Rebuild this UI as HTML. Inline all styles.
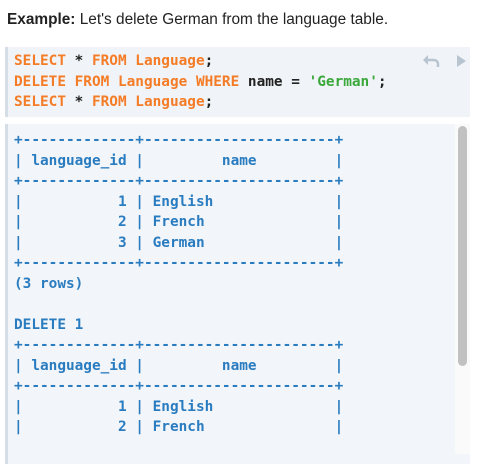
<!DOCTYPE html>
<html><head><style>
body{margin:0;width:481px;height:452px;overflow:hidden;background:#fff;font-family:"Liberation Sans",sans-serif;}
.h{position:absolute;left:7px;top:11px;font-size:15.4px;color:#222;}
.code{position:absolute;left:5px;top:47px;width:465px;height:70px;background:#f0f3f7;border-left:3px solid #d5dde6;box-sizing:border-box;}
pre{margin:0;font-family:"DejaVu Sans Mono","Liberation Mono",monospace;font-weight:bold;font-size:14.4px;line-height:20.5px;}
.code pre{position:absolute;left:6px;top:4px;color:#222;}
.k{color:#f57c27}.s{color:#3aa83a}
.out{position:absolute;left:5px;top:124px;width:465px;height:340px;background:#f2f5f9;border-left:3px solid #d5dde6;box-sizing:border-box;overflow:hidden;}
.out pre{position:absolute;left:6px;top:6px;color:#2a7cc0;}
.sb{position:absolute;left:458px;top:126px;width:9px;height:240px;background:#c1c1c1;border-radius:5px;}
.sbt{position:absolute;left:455px;top:124px;width:15px;height:330px;background:#fafafa;}
</style></head><body>
<div class="h"><b>Example:</b> Let's delete German from the language table.</div>
<div class="code"><pre><span class="k">SELECT</span> * <span class="k">FROM Language</span>;
<span class="k">DELETE FROM Language WHERE</span> name = <span class="s">'German'</span>;
<span class="k">SELECT</span> * <span class="k">FROM Language</span>;</pre>
<svg style="position:absolute;left:413px;top:6px" width="50" height="16" viewBox="0 0 50 16"><path d="M6 7h7a4 4 0 0 1 4 4v3" stroke="#b8c4d0" stroke-width="2.5" fill="none"/><path d="M2 7l5-5v10z" fill="#b8c4d0"/><path d="M36 2l9 6-9 6z" fill="#b8c4d0"/></svg>
</div>
<div class="out"><pre>+-------------+----------------------+
| language_id |         name         |
+-------------+----------------------+
|           1 | English              |
|           2 | French               |
|           3 | German               |
+-------------+----------------------+
(3 rows)

DELETE 1
+-------------+----------------------+
| language_id |         name         |
+-------------+----------------------+
|           1 | English              |
|           2 | French               |</pre></div>
<div class="sbt"></div>
<div class="sb"></div>
</body></html>
